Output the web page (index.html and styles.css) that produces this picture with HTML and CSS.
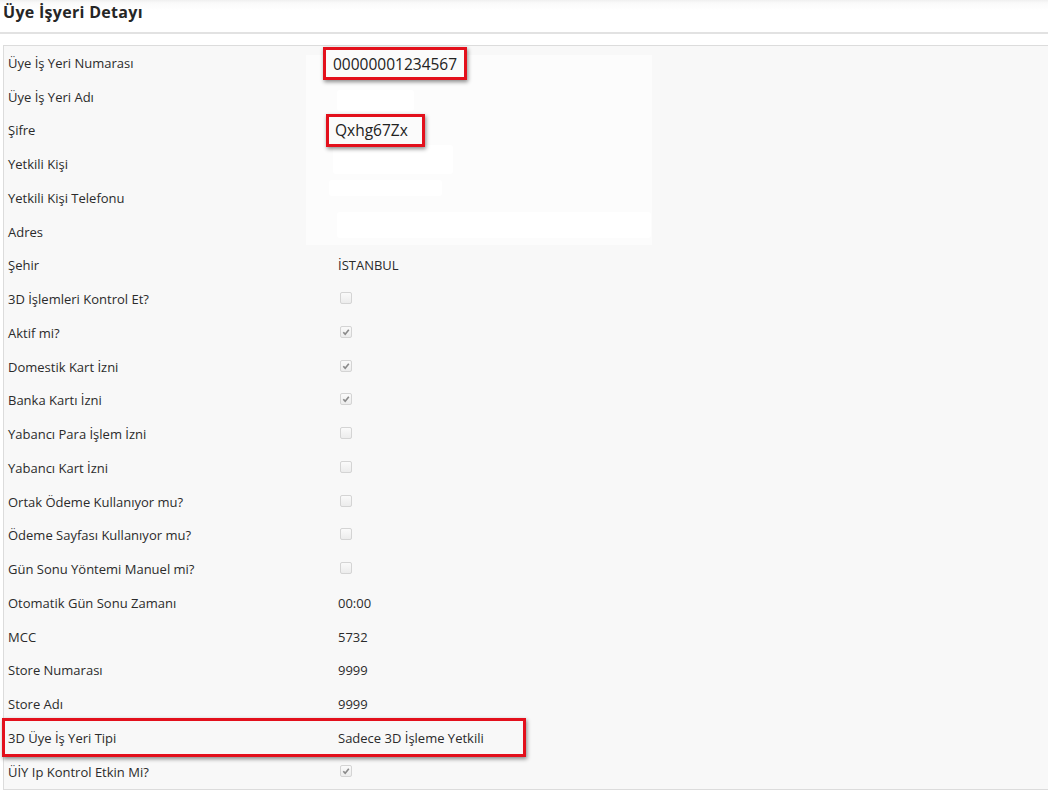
FILE: index.html
```html
<!DOCTYPE html>
<html lang="tr">
<head>
<meta charset="utf-8">
<title>Üye İşyeri Detayı</title>
<link rel="stylesheet" href="styles.css">
</head>
<body>
<div class="page">
  <div class="header">
    <h1 class="title">Üye İşyeri Detayı</h1>
  </div>
  <div class="panel">
    <div class="mask mask-area"></div>
    <div class="mask mask-1"></div>
    <div class="mask mask-2"></div>
    <div class="mask mask-3"></div>
    <div class="mask mask-4"></div>
    <div class="rows">
      <div class="row"><div class="label">Üye İş Yeri Numarası</div><div class="value"><span class="boxed boxed-num">00000001234567</span></div></div>
      <div class="row"><div class="label">Üye İş Yeri Adı</div><div class="value"></div></div>
      <div class="row"><div class="label">Şifre</div><div class="value"><span class="boxed boxed-pass">Qxhg67Zx</span></div></div>
      <div class="row"><div class="label">Yetkili Kişi</div><div class="value"></div></div>
      <div class="row"><div class="label">Yetkili Kişi Telefonu</div><div class="value"></div></div>
      <div class="row"><div class="label">Adres</div><div class="value"></div></div>
      <div class="row"><div class="label">Şehir</div><div class="value">İSTANBUL</div></div>
      <div class="row"><div class="label">3D İşlemleri Kontrol Et?</div><div class="value"><span class="cb"></span></div></div>
      <div class="row"><div class="label">Aktif mi?</div><div class="value"><span class="cb checked"><svg viewBox="0 0 11 11"><path d="M2.5 5.8 L4.6 7.9 L8.6 3" fill="none" stroke="#8a8a8a" stroke-width="1.8"/></svg></span></div></div>
      <div class="row"><div class="label">Domestik Kart İzni</div><div class="value"><span class="cb checked"><svg viewBox="0 0 11 11"><path d="M2.5 5.8 L4.6 7.9 L8.6 3" fill="none" stroke="#8a8a8a" stroke-width="1.8"/></svg></span></div></div>
      <div class="row"><div class="label">Banka Kartı İzni</div><div class="value"><span class="cb checked"><svg viewBox="0 0 11 11"><path d="M2.5 5.8 L4.6 7.9 L8.6 3" fill="none" stroke="#8a8a8a" stroke-width="1.8"/></svg></span></div></div>
      <div class="row"><div class="label">Yabancı Para İşlem İzni</div><div class="value"><span class="cb"></span></div></div>
      <div class="row"><div class="label">Yabancı Kart İzni</div><div class="value"><span class="cb"></span></div></div>
      <div class="row"><div class="label">Ortak Ödeme Kullanıyor mu?</div><div class="value"><span class="cb"></span></div></div>
      <div class="row"><div class="label">Ödeme Sayfası Kullanıyor mu?</div><div class="value"><span class="cb"></span></div></div>
      <div class="row"><div class="label">Gün Sonu Yöntemi Manuel mi?</div><div class="value"><span class="cb"></span></div></div>
      <div class="row"><div class="label">Otomatik Gün Sonu Zamanı</div><div class="value">00:00</div></div>
      <div class="row"><div class="label">MCC</div><div class="value">5732</div></div>
      <div class="row"><div class="label">Store Numarası</div><div class="value">9999</div></div>
      <div class="row"><div class="label">Store Adı</div><div class="value">9999</div></div>
      <div class="row row-boxed"><div class="label">3D Üye İş Yeri Tipi</div><div class="value">Sadece 3D İşleme Yetkili</div></div>
      <div class="row"><div class="label">ÜİY Ip Kontrol Etkin Mi?</div><div class="value"><span class="cb checked"><svg viewBox="0 0 11 11"><path d="M2.5 5.8 L4.6 7.9 L8.6 3" fill="none" stroke="#8a8a8a" stroke-width="1.8"/></svg></span></div></div>
    </div>
  </div>
</div>
</body>
</html>
```

FILE: styles.css
```css
html, body {
  margin: 0;
  padding: 0;
  background: #ffffff;
}

body {
  font-family: "Open Sans", "DejaVu Sans", sans-serif;
  color: #2b2b2b;
  width: 1048px;
  height: 792px;
  overflow: hidden;
}

.page {
  display: flex;
  flex-direction: column;
}

.header {
  height: 32px;
  border-bottom: 2px solid #e2e2e2;
  background: linear-gradient(to bottom, #f0f0f0 0, #fafafa 3px, #ffffff 10px);
  display: flex;
  align-items: center;
  padding-left: 3px;
}

.title {
  margin: 0;
  font-size: 16px;
  font-weight: 700;
  color: #262626;
  letter-spacing: 0.3px;
  position: relative;
  top: -4px;
}

.panel {
  margin-top: 11px;
  margin-left: 3px;
  border: 1px solid #dcdcdc;
  border-right: none;
  background: #f8f8f8;
  position: relative;
  height: 743px;
}

.rows {
  display: grid;
  grid-auto-rows: 33.75px;
  position: relative;
  z-index: 1;
}

.row {
  display: grid;
  grid-template-columns: 334px 1fr;
  align-items: center;
  font-size: 13px;
  position: relative;
}

.label {
  padding-left: 4px;
  color: #2b2b2b;
}

.value {
  display: flex;
  align-items: center;
  color: #2b2b2b;
}

.boxed {
  display: inline-flex;
  align-items: center;
  border: 3px solid #e3101c;
  box-shadow: 1px 2px 4px rgba(0, 0, 0, 0.45);
  font-family: "Open Sans", sans-serif;
  font-size: 15.5px;
  color: #222222;
  background: #fbfbfb;
  box-sizing: border-box;
}

.boxed-num {
  margin-left: -15px;
  height: 33px;
  padding: 0 7px 0 7px;
  position: relative;
  top: 1px;
}

.boxed-pass {
  margin-left: -12px;
  height: 33px;
  padding: 0 14px 0 6px;
}

.row-boxed::after {
  content: "";
  position: absolute;
  left: -2px;
  top: -3px;
  width: 518px;
  height: 33px;
  border: 3px solid #e3101c;
  box-shadow: 1px 2px 4px rgba(0, 0, 0, 0.45);
}

.cb {
  width: 10px;
  height: 10px;
  margin-left: 2px;
  border: 1px solid #d4d4d4;
  border-radius: 2px;
  background: linear-gradient(#fafafa, #ececec);
  display: inline-flex;
  position: relative;
  top: -1px;
}

.cb svg {
  width: 10px;
  height: 10px;
}

.mask {
  position: absolute;
  background: #ffffff;
}

.mask-area {
  left: 302px;
  top: 9px;
  width: 346px;
  height: 190px;
  background: #fcfcfc;
}

.mask-1 {
  left: 333px;
  top: 44px;
  width: 77px;
  height: 21px;
  border-radius: 3px;
}

.mask-2 {
  left: 329px;
  top: 99px;
  width: 120px;
  height: 29px;
  border-radius: 3px;
}

.mask-3 {
  left: 325px;
  top: 134px;
  width: 113px;
  height: 16px;
  border-radius: 3px;
}

.mask-4 {
  left: 333px;
  top: 166px;
  width: 314px;
  height: 26px;
  border-radius: 3px;
}
```
